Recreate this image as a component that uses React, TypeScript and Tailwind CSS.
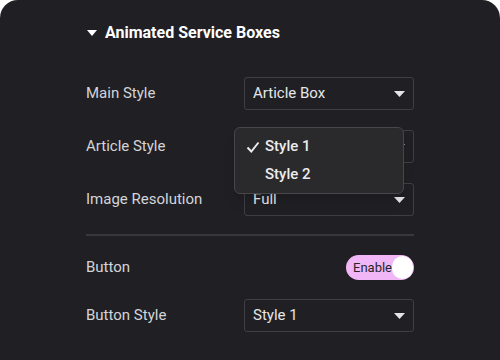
import React from 'react'

const Caret = () => (
  <svg width="11" height="6" viewBox="0 0 11 6" className="shrink-0">
    <path d="M0 0h11L5.5 6z" fill="#e4e4e7" />
  </svg>
)

const Select: React.FC<{ value?: string }> = ({ value }) => (
  <div className="w-[170px] h-[33px] border border-[#3e3e44] rounded-[3px] flex items-center justify-between pl-[8px] pr-[8px] text-[15px] text-[#e6e6e8]">
    <span>{value}</span>
    <Caret />
  </div>
)

const Row: React.FC<{ label: string; children: React.ReactNode }> = ({ label, children }) => (
  <div className="flex items-center justify-between h-[33px]">
    <span className="text-[15px] text-[#d4d4d8]">{label}</span>
    {children}
  </div>
)

const App: React.FC = () => {
  return (
    <div className="w-[500px] h-[360px] bg-white overflow-hidden" style={{ fontFamily: 'Roboto, "Liberation Sans", sans-serif' }}>
      <div className="h-full bg-[#202024] rounded-t-[18px] pt-[22px] pl-[86px] pr-[86px]">
        {/* Section header */}
        <div className="flex items-center h-[22px] gap-[8px] pl-[1px]">
          <svg width="10" height="6" viewBox="0 0 10 6">
            <path d="M0 0h10L5 6z" fill="#ffffff" />
          </svg>
          <span className="text-[16px] font-bold text-white">Animated Service Boxes</span>
        </div>

        <div className="mt-[33px] flex flex-col gap-[20px]">
          <Row label="Main Style">
            <Select value="Article Box" />
          </Row>
          <Row label="Article Style">
            <div className="relative">
              <Select />
              {/* open dropdown */}
              <div className="absolute left-[-10px] top-[-3px] w-[170px] h-[67px] bg-[#2a2a2d] border border-[#46464b] rounded-[6px] shadow-lg z-10 flex flex-col justify-center text-[15px] font-medium text-[#ececee]">
                <div className="flex items-center h-[28px] pl-[11px] gap-[5px]">
                  <svg width="14" height="12" viewBox="0 0 14 12">
                    <path d="M1.5 6.5l3.8 4L12.5 1.5" fill="none" stroke="#ececee" strokeWidth="2" />
                  </svg>
                  <span>Style 1</span>
                </div>
                <div className="flex items-center h-[28px] pl-[30px]">
                  <span>Style 2</span>
                </div>
              </div>
            </div>
          </Row>
          <Row label="Image Resolution">
            <Select value="Full" />
          </Row>
        </div>

        <div className="mt-[18px] h-[2px] bg-[#37373c]" />

        <div className="mt-[19px] flex items-center justify-between h-[25px]">
          <span className="text-[15px] text-[#d4d4d8]">Button</span>
          <div className="w-[68px] h-[25px] rounded-full bg-[#f0b6f5] flex items-center justify-between pl-[7px] pr-[1px]">
            <span className="text-[13px] text-[#26262a]">Enable</span>
            <span className="w-[23px] h-[23px] rounded-full bg-white" />
          </div>
        </div>

        <div className="mt-[19px]">
          <Row label="Button Style">
            <Select value="Style 1" />
          </Row>
        </div>
      </div>
    </div>
  )
}

export default App
